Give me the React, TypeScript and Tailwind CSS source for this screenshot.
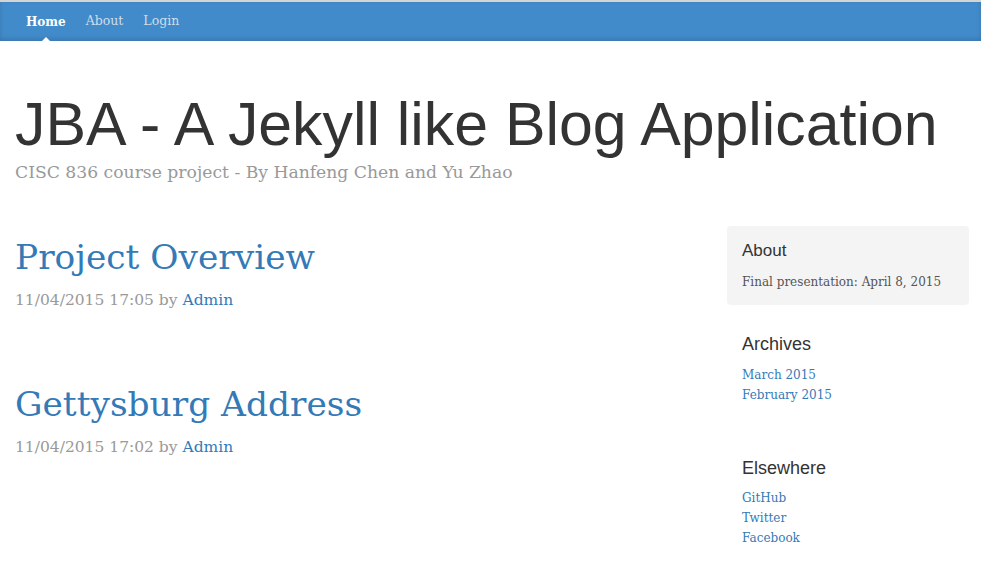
export default function App() {
  const serif = { fontFamily: '"DejaVu Serif", Georgia, serif' };
  const sans = { fontFamily: '"Liberation Sans", Arial, sans-serif' };
  return (
    <div className="min-h-[570px] bg-white text-[#555]" style={serif}>
      <div className="border-t-2 border-[#d4d4d4] bg-[#428bca] shadow-[inset_0_-2px_5px_rgba(0,0,0,0.15)]">
        <nav className="flex h-[39px] items-center px-[16px] text-[12.5px]">
          <a className="relative pl-[10px] pr-[10px] text-[12px] font-bold text-white">
            Home
            <span className="absolute bottom-[-11px] left-1/2 -ml-[5px] h-0 w-0 border-x-[5px] border-b-[5px] border-x-transparent border-b-white" />
          </a>
          <a className="px-[10px] text-[#cdddeb]">About</a>
          <a className="px-[10px] text-[#cdddeb]">Login</a>
        </nav>
      </div>

      <div className="px-[15px]">
        <header className="pt-[50px] pb-[44px]">
          <h1 className="whitespace-nowrap text-[60.8px] leading-[67px] text-[#333]" style={sans}>
            JBA - A Jekyll like Blog Application
          </h1>
          <p className="mt-[4px] text-[17.2px] leading-[20px] text-[#999]">CISC 836 course project - By Hanfeng Chen and Yu Zhao</p>
        </header>

        <div className="flex">
          <main className="flex-1">
            <article className="mb-[62px] pt-[9px]">
              <h2 className="text-[34.4px] leading-[44px] text-[#337ab7]">Project Overview</h2>
              <p className="mt-[10px] text-[15.5px] leading-[22px] text-[#999]">
                11/04/2015 17:05 by <a className="text-[#337ab7]">Admin</a>
              </p>
            </article>
            <article className="pt-[9px]">
              <h2 className="text-[34.4px] leading-[44px] text-[#337ab7]">Gettysburg Address</h2>
              <p className="mt-[10px] text-[15.5px] leading-[22px] text-[#999]">
                11/04/2015 17:02 by <a className="text-[#337ab7]">Admin</a>
              </p>
            </article>
          </main>

          <aside className="mr-[-3px] w-[242px] shrink-0">
            <div className="rounded-[4px] bg-[#f4f4f4] px-[15px] pt-[13px] pb-[13px]">
              <h4 className="text-[17px] leading-[24px] text-[#333]" style={sans}>About</h4>
              <p className="mt-[9px] text-[12px] leading-[20px]">Final presentation: April 8, 2015</p>
            </div>
            <div className="px-[15px] pt-[27px]">
              <h4 className="text-[18px] leading-[24px] text-[#333]" style={sans}>Archives</h4>
              <ol className="mt-[9px] text-[12px] leading-[20px] text-[#337ab7]">
                <li><a>March 2015</a></li>
                <li><a>February 2015</a></li>
              </ol>
            </div>
            <div className="px-[15px] pt-[51px]">
              <h4 className="text-[18px] leading-[24px] text-[#333]" style={sans}>Elsewhere</h4>
              <ol className="mt-[8px] text-[12px] leading-[20px] text-[#337ab7]">
                <li><a>GitHub</a></li>
                <li><a>Twitter</a></li>
                <li><a>Facebook</a></li>
              </ol>
            </div>
          </aside>
        </div>
      </div>
    </div>
  );
}
